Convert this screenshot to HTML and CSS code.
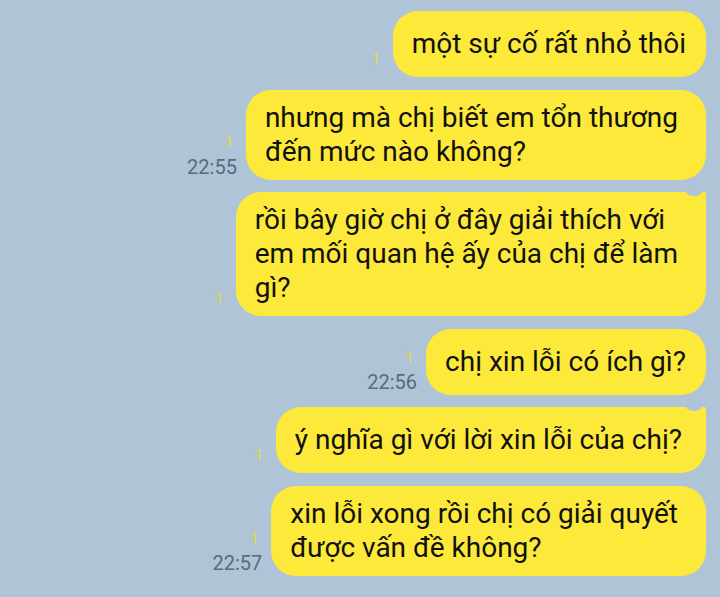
FILE: index.html
```html
<!DOCTYPE html>
<html lang="vi">
<head>
<meta charset="utf-8">
<link rel="stylesheet" href="styles.css">
</head>
<body>
<div class="chat">
  <div class="row">
    <div class="meta"><span class="read">1</span></div>
    <div class="bubble">một sự cố rất nhỏ thôi</div>
  </div>
  <div class="row">
    <div class="meta"><span class="read">1</span><span class="time">22:55</span></div>
    <div class="bubble multi">nhưng mà chị biết em tổn thương<br>đến mức nào không?</div>
  </div>
  <div class="row">
    <div class="meta"><span class="read">1</span></div>
    <div class="bubble tail multi">rồi bây giờ chị ở đây giải thích với<br>em mối quan hệ ấy của chị để làm<br>gì?</div>
  </div>
  <div class="row">
    <div class="meta"><span class="read">1</span><span class="time">22:56</span></div>
    <div class="bubble">chị xin lỗi có ích gì?</div>
  </div>
  <div class="row">
    <div class="meta"><span class="read">1</span></div>
    <div class="bubble tail wide">ý nghĩa gì với lời xin lỗi của chị?</div>
  </div>
  <div class="row">
    <div class="meta"><span class="read">1</span><span class="time">22:57</span></div>
    <div class="bubble multi">xin lỗi xong rồi chị có giải quyết<br>được vấn đề không?</div>
  </div>
</div>
</body>
</html>
```

FILE: styles.css
```css
html, body {
  margin: 0;
  padding: 0;
  background: #b0c4d8;
  height: 100%;
  overflow: hidden;
}
.chat {
  display: flex;
  flex-direction: column;
  align-items: flex-end;
  gap: 12.5px;
  padding: 11px 14px 0 0;
  font-family: Roboto, "Noto Sans", sans-serif;
}
.row {
  display: flex;
  align-items: flex-end;
  gap: 9px;
}
.meta {
  display: flex;
  flex-direction: column;
  align-items: flex-end;
  padding-bottom: 3px;
  line-height: 1;
}
.read {
  color: #dcd850;
  font-size: 17px;
  padding-right: 3px;
  margin-bottom: 6px;
}
.time {
  color: #5a6a7b;
  font-size: 20px;
}
.bubble {
  position: relative;
  background: #fde93a;
  color: #111;
  font-size: 28px;
  line-height: 34px;
  padding: 11px 20px 11px 19px;
  min-height: 44px;
  display: flex;
  align-items: center;
  border-radius: 25px;
}
.bubble.multi {
  padding-right: 28px;
}
.bubble.wide {
  padding-right: 24px;
}
.bubble.tail {
  border-top-right-radius: 2px;
}
.bubble.tail::after {
  content: "";
  position: absolute;
  top: -5px;
  right: 4px;
  width: 16px;
  height: 9px;
  border-radius: 50%;
  background: #b0c4d8;
}
```
